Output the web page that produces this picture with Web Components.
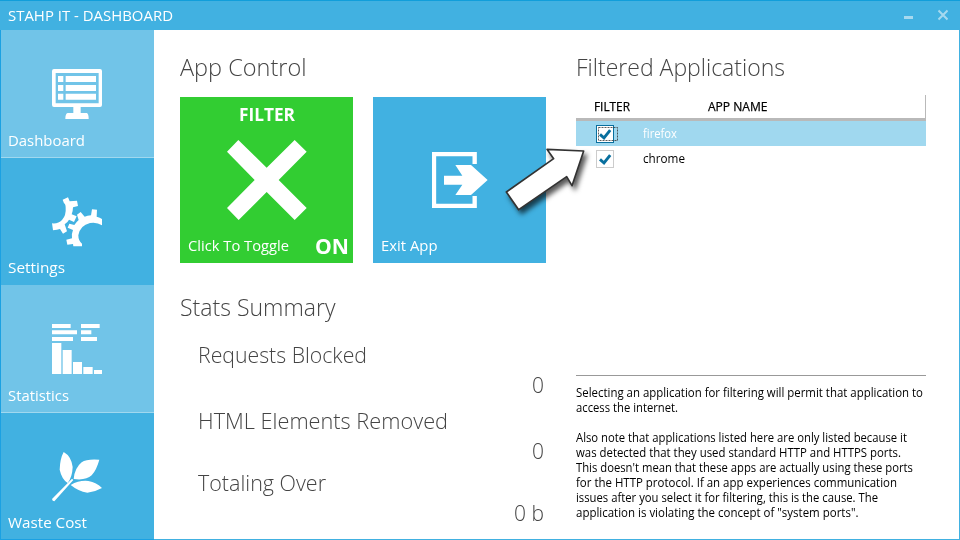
<!DOCTYPE html>
<html lang="en">
<head>
<meta charset="utf-8">
<title>STAHP IT - DASHBOARD</title>
<style>
html, body { margin: 0; height: 100%; overflow: hidden; }
body { font-family: "Open Sans", "Noto Sans", sans-serif; color: #000; background: #fff; }
</style>
</head>
<body>
<app-window></app-window>
<script>
// Single line of text condensed or expanded to a given advance width.
class TextLine extends HTMLElement {
  connectedCallback() {
    const root = this.attachShadow({ mode: 'open' });
    root.innerHTML = `<style>
      :host { display: block; white-space: nowrap; }
      span { display: inline-block; transform-origin: 0 50%; }
    </style><span><slot></slot></span>`;
    const span = root.querySelector('span');
    const w = parseFloat(this.getAttribute('w'));
    this.style.width = w + 'px';
    const natural = span.getBoundingClientRect().width;
    if (natural) span.style.transform = `scaleX(${w / natural})`;
  }
}

class TitleBar extends HTMLElement {
  connectedCallback() {
    this.attachShadow({ mode: 'open' }).innerHTML = `<style>
      :host { display: flex; justify-content: space-between; box-sizing: border-box; height: 30px;
        background: #41b1e1; border-top: 1px solid #119eda; padding: 0 12px 0 8px; color: #fff; }
      text-line { font-size: 14.5px; line-height: 29px; }
      svg { width: 44px; height: 29px; }
    </style>
    <text-line w="165"><slot></slot></text-line>
    <svg viewBox="0 0 44 29"><path d="M0 15h9v3H0z" fill="#a6d9ef"/><path d="M34.5 9.5l9 9M43.5 9.5l-9 9" stroke="#a6d9ef" stroke-width="2"/></svg>`;
  }
}

class NavTile extends HTMLElement {
  connectedCallback() {
    this.attachShadow({ mode: 'open' }).innerHTML = `<style>
      :host { display: flex; flex-direction: column; justify-content: flex-end; box-sizing: border-box;
        height: 127px; background: #41b1e1; padding: 0 0 7px 7px; color: #fff; }
      :host([light]) { height: 128px; background: #71c4e8; border-bottom: 1px solid #a0d8ef; padding-bottom: 6px; }
      .icon { display: flex; height: 50px; margin: 0 0 9px 44px; }
      :host([light]) .icon { margin-bottom: 10px; }
      text-line { font-size: 15px; line-height: 22px; }
    </style>
    <div class="icon"><slot name="icon"></slot></div>
    <text-line w="${this.getAttribute('w')}"><slot></slot></text-line>`;
  }
}

class ActionTile extends HTMLElement {
  connectedCallback() {
    this.attachShadow({ mode: 'open' }).innerHTML = `<style>
      :host { display: grid; grid-template-rows: 35px 98px 33px; width: 173px; height: 166px;
        background: var(--tile, #41b1e1); color: #fff; }
      .head { display: flex; justify-content: center; }
      .icon { display: flex; justify-content: center; }
      .foot { display: flex; justify-content: space-between; padding: 0 4px 0 8px; }
      .foot text-line { font-size: 15px; line-height: 30px; }
    </style>
    <div class="head"><slot name="head"></slot></div>
    <div class="icon"><slot name="icon"></slot></div>
    <div class="foot"><text-line w="${this.getAttribute('w')}"><slot></slot></text-line><slot name="state"></slot></div>`;
  }
}

class SectionTitle extends HTMLElement {
  connectedCallback() {
    this.attachShadow({ mode: 'open' }).innerHTML = `<style>
      :host { display: block; height: 32px; font-size: 24px; line-height: 32px; font-weight: 300; color: #444; }
    </style><text-line w="${this.getAttribute('w')}"><slot></slot></text-line>`;
  }
}

class StatRow extends HTMLElement {
  connectedCallback() {
    this.attachShadow({ mode: 'open' }).innerHTML = `<style>
      :host { display: grid; grid-template-rows: 29px 30px; padding: 0 2px 0 18px; font-size: 22px; line-height: 29px; font-weight: 300; color: #444; }
      .value { justify-self: end; padding-top: 1px; }
    </style>
    <text-line w="${this.getAttribute('w')}"><slot></slot></text-line>
    <text-line class="value" w="${this.getAttribute('vw')}">${this.getAttribute('value')}</text-line>`;
  }
}

class AppRow extends HTMLElement {
  connectedCallback() {
    this.attachShadow({ mode: 'open' }).innerHTML = `<style>
      :host { display: flex; box-sizing: border-box; height: 25px; padding: 4px 0 0 20px; gap: 7px; font-size: 12px; line-height: 17px; }
      :host([selected]) { background: #a0d8ef; color: #fff; }
      svg { width: 40px; height: 18px; flex: none; }
      :host([selected]) .box { stroke: #086f9e; }
      .box { stroke: #ccc; }
      .focus { display: none; stroke: #333; stroke-width: .8; stroke-dasharray: 2 1; }
      :host([selected]) .focus { display: inline; }
    </style>
    <svg viewBox="0 0 40 18"><rect class="box" x=".5" y=".5" width="17" height="17" fill="#fff"/>
      <path d="M4 9.4L8 13L14.2 5.1" fill="none" stroke="#086f9e" stroke-width="2.9"/>
      <rect class="focus" x="2.5" y="2.5" width="19" height="13" fill="none"/></svg>
    <text-line w="${this.getAttribute('w')}"><slot></slot></text-line>`;
  }
}

class AppTable extends HTMLElement {
  connectedCallback() {
    this.attachShadow({ mode: 'open' }).innerHTML = `<style>
      :host { display: block; box-sizing: border-box; height: 281px; border-bottom: 1px solid #999; }
      header { display: flex; box-sizing: border-box; height: 26px; padding: 3px 0 0 18px; gap: 78px;
        border-bottom: 3px solid #b9b9b9; font-size: 12px; line-height: 17px;
        background: linear-gradient(#b9b9b9, #b9b9b9) right / 1px 100% no-repeat; -webkit-text-stroke: .25px; }
    </style>
    <header><text-line w="36">FILTER</text-line><text-line w="59.5">APP NAME</text-line></header>
    <slot></slot>`;
  }
}

class PointerArrow extends HTMLElement {
  connectedCallback() {
    this.attachShadow({ mode: 'open' }).innerHTML = `<style>
      :host { display: block; position: absolute; left: 500px; top: 140px; width: 100px; height: 84px; }
      svg { width: 100px; height: 84px; filter: drop-shadow(3px 4px 2.5px rgba(0,0,0,.65)); }
    </style>
    <svg viewBox="390 150 300 252"><path d="M531 178L641 183L606 287L590 260L446 359L409 306L551 206Z" fill="#fff" stroke="#333" stroke-width="5" stroke-linejoin="round"/></svg>`;
  }
}

class AppWindow extends HTMLElement {
  connectedCallback() {
    this.attachShadow({ mode: 'open' }).innerHTML = `<style>
      :host { display: grid; position: relative; grid-template-rows: 30px 1fr; box-sizing: border-box; width: 960px; height: 540px; background: #fff; }
      .body { display: grid; grid-template-columns: 154px 366px 350px; box-sizing: border-box;
        border-right: 1px solid #41b1e1; border-bottom: 1px solid #41b1e1; min-height: 0; }
      nav { box-sizing: border-box; border-left: 1px solid #1ba1e2; margin-bottom: -1px; border-bottom: 1px solid #1ba1e2; }
      nav nav-tile:last-child { height: 126px; padding-bottom: 6px; }
      main { padding: 21px 0 0 26px; width: 366px; }
      aside { padding: 21px 0 0 56px; width: 350px; }
      .tiles { display: flex; gap: 20px; margin: 14px 0 28px; }
      .tiles action-tile:first-child { --tile: #32cd32; }
      .stats { display: grid; margin-top: 17px; }
      .stats stat-row:nth-child(1) { margin-bottom: 7px; }
      .stats stat-row:nth-child(2) { margin-bottom: 3px; }
      app-table { margin-top: 12px; }
      .note { padding-top: 9px; font-size: 11.7px; line-height: 15px; }
      .note text-line:nth-child(2) { margin-bottom: 15px; }
      .head { font-size: 18px; font-weight: 700; line-height: 35px; }
      .state { font-size: 21px; font-weight: 700; line-height: 32px; }
      svg { display: block; fill: #fff; }
    </style>
    <title-bar>STAHP IT - DASHBOARD</title-bar>
    <div class="body">
      <nav>
        <nav-tile light w="77">Dashboard<svg slot="icon" width="50" height="50" viewBox="156 207 150 150">
          <path fill-rule="evenodd" d="M162 207H300Q306 207 306 213V315Q306 321 300 321H242V339H260Q266 341 266 357H196Q196 341 203 339H220V321H162Q156 321 156 315V213Q156 207 162 207ZM167 219V310H296V219Z"/>
          <path d="M174 228h16v18h-16zM197 228h91v18h-91zM174 255h16v18h-16zM197 255h91v18h-91zM174 281h16v18h-16zM197 281h91v18h-91z"/></svg></nav-tile>
        <nav-tile w="57">Settings<svg slot="icon" width="50" height="50" viewBox="156 125 150 150">
          <path d="M188 133L204 126L209 138L231 136L234 152L219 156Q219 167 215 177L230 183L222 200L207 193Q203 201 194 207L201 228L189 235L180 221Q172 224 159 225L156 204Q175 206 186 194Q199 179 197 157Q197 146 192 144Z"/>
          <path d="M203 217L208 205L223 209Q228 201 236 194L231 178L242 170L254 184Q262 181 273 180L276 162L291 163L290 184Q300 187 306 191V210Q290 199 270 203Q240 210 235 240Q235 257 246 265V273H220L219 266L202 268L199 253L216 249Q214 235 219 224Z"/></svg></nav-tile>
        <nav-tile light w="61">Statistics<svg slot="icon" width="50" height="50" viewBox="156 117 150 150">
          <path d="M156 117h56v12h-56zM243 117h56v12h-56zM156 136h75v12h-75zM243 136h31v12h-31zM156 156h63v12h-63zM243 156h48v12h-48zM156 174h28v93h-28zM188 195h27v72h-27zM219 231h27v36h-27zM250 246h28v21h-28zM282 255h24v12h-24z"/></svg></nav-tile>
        <nav-tile w="79">Waste Cost<svg slot="icon" width="50" height="50" viewBox="156 125 150 150">
          <path d="M191 125Q180 145 179 178Q185 206 203 218Q217 200 218 170Q214 138 191 125ZM298 148Q260 145 245 156Q224 173 221 206Q258 211 275 195Q290 178 298 148ZM212 224Q238 209 265 212Q290 217 306 233Q285 245 262 247Q235 243 212 224ZM156 266L216 205L220 209L163 273Q157 273 156 266Z"/></svg></nav-tile>
      </nav>
      <main>
        <section-title w="126.5">App Control</section-title>
        <div class="tiles">
          <action-tile w="101"><text-line class="head" slot="head" w="56">FILTER</text-line>Click To Toggle
            <svg slot="icon" width="80" height="80" style="margin-top:8px" viewBox="157 300 240 240"><path d="M191 300L157 335L240 420L157 504L192 540L276 456L360 540L396 504L312 420L396 335L360 300L276 383Z"/></svg>
            <text-line class="state" slot="state" w="34">ON</text-line></action-tile>
          <action-tile w="56.5">Exit App
            <svg slot="icon" width="56" height="56" style="margin:20px 0 0 1px" viewBox="186 186 168 168"><path d="M314 222V192H192V348H314V318" fill="none" stroke="#fff" stroke-width="13"/><path d="M222 257H277L256 225H303L353 270L303 315H256L277 284H222Z"/></svg></action-tile>
        </div>
        <section-title w="155.5">Stats Summary</section-title>
        <div class="stats">
          <stat-row w="169" value="0" vw="12">Requests Blocked</stat-row>
          <stat-row w="250" value="0" vw="12">HTML Elements Removed</stat-row>
          <stat-row w="128" value="0 b" vw="30">Totaling Over</stat-row>
        </div>
      </main>
      <aside>
        <section-title w="209">Filtered Applications</section-title>
        <app-table>
          <app-row selected w="34">firefox</app-row>
          <app-row w="42">chrome</app-row>
        </app-table>
        <div class="note">
          <text-line w="347">Selecting an application for filtering will permit that application to</text-line>
          <text-line w="102">access the internet.</text-line>
          <text-line w="331">Also note that applications listed here are only listed because it</text-line>
          <text-line w="325">was detected that they used standard HTTP and HTTPS ports.</text-line>
          <text-line w="337">This doesn't mean that these apps are actually using these ports</text-line>
          <text-line w="321">for the HTTP protocol. If an app experiences communication</text-line>
          <text-line w="302">issues after you select it for filtering, this is the cause. The</text-line>
          <text-line w="282.5">application is violating the concept of "system ports".</text-line>
        </div>
      </aside>
    </div>
    <pointer-arrow></pointer-arrow>`;
  }
}

customElements.define('text-line', TextLine);
customElements.define('title-bar', TitleBar);
customElements.define('nav-tile', NavTile);
customElements.define('action-tile', ActionTile);
customElements.define('section-title', SectionTitle);
customElements.define('stat-row', StatRow);
customElements.define('app-row', AppRow);
customElements.define('app-table', AppTable);
customElements.define('pointer-arrow', PointerArrow);
customElements.define('app-window', AppWindow);
</script>
</body>
</html>
